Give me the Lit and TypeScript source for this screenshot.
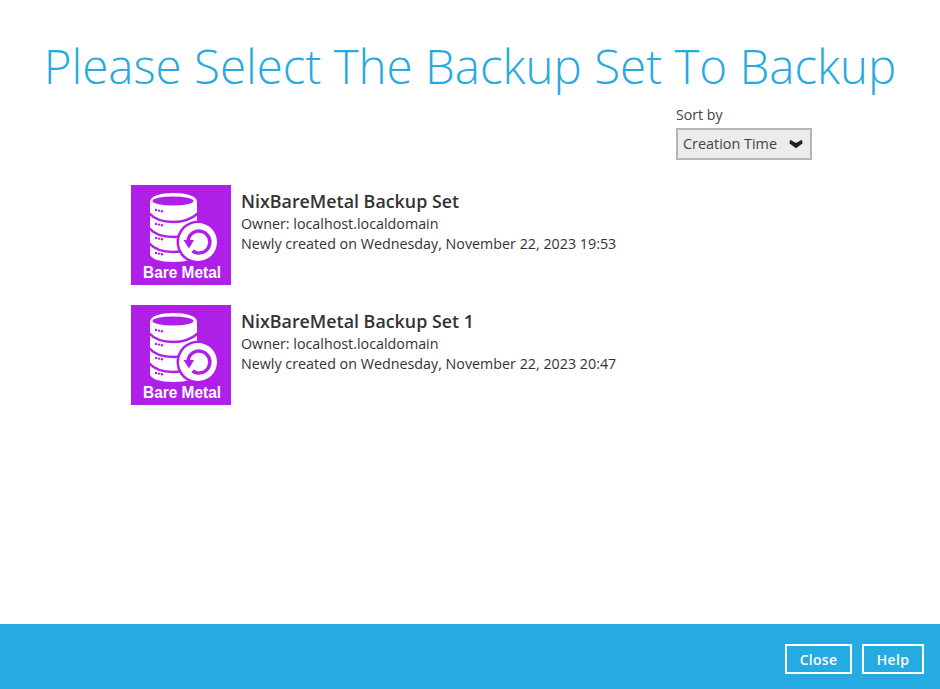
import { html, css, LitElement, svg } from "lit";
import { customElement } from "lit/decorators.js";

const sets = [
  { name: "NixBareMetal Backup Set", created: "Wednesday, November 22, 2023 19:53" },
  { name: "NixBareMetal Backup Set 1", created: "Wednesday, November 22, 2023 20:47" },
];

const purple = "#b01fe8";

// band between two disks of the stack, curves down toward the middle
const band = (y: number) => svg`
  <path d="M18 ${y}c6 7 15 9 24.500 9s18-3 25-9" fill="none" stroke="${purple}" stroke-width="2.400"/>
`;

const dots = (y: number) => svg`
  <circle cx="25" cy="${y}" r="1.200" fill="${purple}"/>
  <circle cx="28" cy="${y + 0.6}" r="1.200" fill="${purple}"/>
  <circle cx="31" cy="${y + 1.2}" r="1.200" fill="${purple}"/>
`;

@customElement("app-root")
export class AppRoot extends LitElement {
  static styles = css`
    :host {
      display: flex;
      flex-direction: column;
      height: 689px;
      font-family: "Open Sans", "Liberation Sans", sans-serif;
      color: #333;
      background: #fff;
    }
    .main {
      flex: 1;
      display: flex;
      flex-direction: column;
    }
    h1 {
      margin: 0;
      padding-top: 34px;
      height: 68px;
      line-height: 64px;
      font-size: 47.5px;
      font-weight: 300;
      color: #25aae1;
      text-align: center;
      white-space: nowrap;
    }
    .sort {
      margin: 3px 0 0 676px;
      width: 136px;
    }
    .sort label {
      display: block;
      font-size: 14.2px;
      line-height: 20px;
      margin-bottom: 3px;
      color: #444;
    }
    .select {
      box-sizing: border-box;
      height: 32px;
      border: 2px solid #b5b5b5;
      background: #ececec;
      display: flex;
      align-items: center;
      justify-content: space-between;
      padding: 0 7px 2px 5px;
      font-size: 14.4px;
      color: #444;
    }
    .select svg {
      margin-top: 2px;
    }
    .list {
      margin: 25px 0 0 131px;
      display: flex;
      flex-direction: column;
      gap: 20px;
    }
    .row {
      display: flex;
      gap: 10px;
      height: 100px;
    }
    .row svg.icon {
      display: block;
      width: 100px;
      height: 100px;
      flex: none;
    }
    .title {
      font-size: 17.85px;
      font-weight: 600;
      line-height: 25px;
      margin: 4px 0 0;
      color: #333;
    }
    .info {
      font-size: 14.3px;
      line-height: 20px;
      color: #333;
    }
    .footer {
      box-sizing: border-box;
      height: 65px;
      background: #25aae1;
      display: flex;
      align-items: center;
      justify-content: flex-end;
      gap: 10px;
      padding: 5px 16px 0;
    }
    .btn {
      box-sizing: border-box;
      height: 30px;
      border: 2px solid #fff;
      background: none;
      color: #fff;
      font: 600 14px "Open Sans", "Liberation Sans", sans-serif;
      letter-spacing: 0.3px;
      padding: 0;
    }
    .close { width: 67px; }
    .help { width: 62px; }
  `;

  private icon() {
    return html`<svg class="icon" viewBox="0 0 100 100">
      <rect width="100" height="100" fill="${purple}"/>
      <path d="M19 17c0-6 10.500-9 23.500-9s23.500 3 23.500 9v52c0 5-10.500 8-23.500 8S19 74 19 69z" fill="#fff"/>
      <ellipse cx="42" cy="16" rx="20.500" ry="4.600" fill="${purple}"/>
      ${band(28)} ${band(43)} ${band(58)}
      ${dots(25)} ${dots(39)} ${dots(53)} ${dots(68)}
      <circle cx="67" cy="57" r="21.500" fill="${purple}"/>
      <circle cx="67" cy="57" r="19" fill="#fff"/>
      <path d="M57 55.500a11 11 0 1 1 4.500 10.500" fill="none" stroke="${purple}" stroke-width="3.400"/>
      <path d="M52.500 55h10.500l-5 8.500z" fill="${purple}"/>
      <text x="12" y="93" textLength="78" lengthAdjust="spacingAndGlyphs" fill="#fff" font-family="Liberation Sans, sans-serif" font-weight="700" font-size="16.500">Bare Metal</text>
    </svg>`;
  }

  render() {
    return html`
      <div class="main">
        <h1>Please Select The Backup Set To Backup</h1>
        <div class="sort">
          <label>Sort by</label>
          <div class="select">
            <span>Creation Time</span>
            <svg width="14" height="10" viewBox="0 0 14 10">
              <path d="M1 .8l6 3.200 6-3.200 .5 3.700L7 9.200.5 4.500z" fill="#222"/>
            </svg>
          </div>
        </div>
        <div class="list">
          ${sets.map(
            (s) => html`
              <div class="row">
                ${this.icon()}
                <div>
                  <p class="title">${s.name}</p>
                  <div class="info">Owner: localhost.localdomain</div>
                  <div class="info">Newly created on ${s.created}</div>
                </div>
              </div>
            `
          )}
        </div>
      </div>
      <div class="footer">
        <button class="btn close">Close</button>
        <button class="btn help">Help</button>
      </div>
    `;
  }
}
